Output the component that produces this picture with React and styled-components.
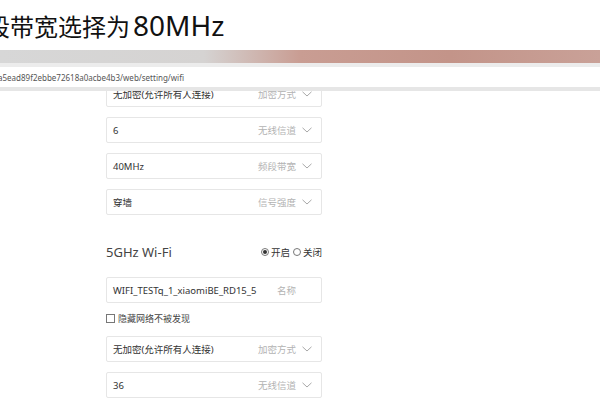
import styled, { createGlobalStyle } from 'styled-components';

const GlobalStyle = createGlobalStyle`
  html, body {
    margin: 0;
    padding: 0;
    background: #fff;
    overflow: hidden;
  }
  body {
    width: 600px;
    height: 400px;
    font-family: "Noto Sans", "Noto Sans CJK SC", sans-serif;
  }
`;

const Page = styled.div`
  width: 600px;
  height: 400px;
  overflow: hidden;
  display: flex;
  flex-direction: column;
`;

const SlideTitle = styled.h1`
  margin: 0;
  height: 50px;
  display: flex;
  align-items: center;
  font-size: 24px;
  font-weight: 400;
  color: #111;
  white-space: nowrap;
  font-family: "Noto Sans", "Noto Sans CJK SC", sans-serif;
`;

const TitleText = styled.span`
  margin-left: -14px;
`;

const TitleLatin = styled.span`
  font-size: 28px;
  margin-left: 3px;
`;

const BrowserBar = styled.div`
  height: 13px;
  background: linear-gradient(
    90deg,
    #d7d7d7 0%,
    #d5d3d2 34%,
    #c99d93 50%,
    #c39489 75%,
    #c9a198 100%
  );
`;

const AddressBar = styled.div`
  height: 20px;
  border-top: 4px solid #ececec;
  border-bottom: 4px solid #e6e6e6;
  background: #fff;
  display: flex;
  align-items: center;
  font-size: 8px;
  color: #555;
  white-space: nowrap;
`;

const Url = styled.span`
  margin-left: -2px;
`;

const Viewport = styled.div`
  flex: 1;
  overflow: hidden;
`;

const Form = styled.div`
  width: 216px;
  margin-left: 106px;
  margin-top: -10px;
  display: flex;
  flex-direction: column;
`;

const Field = styled.div`
  height: 24px;
  border: 1px solid #e6e6e6;
  border-radius: 2px;
  display: flex;
  align-items: center;
  padding: 0 9px 0 6px;
  margin-bottom: ${p => p.$gap ?? 10}px;
  font-size: 9.5px;
  color: #333;
  background: #fff;
`;

const Value = styled.span`
  flex: 1;
  white-space: nowrap;
`;

const NameValue = styled.span`
  width: 164px;
  white-space: nowrap;
`;

const Hint = styled.span`
  color: #b3b3b3;
  font-size: 9.5px;
  margin-right: 6px;
  white-space: nowrap;
`;

const Chevron = () => (
  <svg width="10" height="6" viewBox="0 0 10 6">
    <path d="M0.5 0.8 L5 5 L9.5 0.8" fill="none" stroke="#a8a8a8" strokeWidth="1" />
  </svg>
);

const SectionHead = styled.div`
  margin-top: 27px;
  height: 20px;
  display: flex;
  align-items: center;
  justify-content: space-between;
  margin-bottom: 15px;
`;

const SectionTitle = styled.span`
  font-size: 13px;
  color: #444;
`;

const RadioGroup = styled.div`
  display: flex;
  align-items: center;
  font-size: 9.5px;
  color: #333;
`;

const Radio = styled.span`
  width: 6px;
  height: 6px;
  border-radius: 50%;
  border: 1px solid #777;
  display: inline-flex;
  align-items: center;
  justify-content: center;
  margin: 0 2px 0 ${p => (p.$first ? 0 : 3)}px;

  &::after {
    content: '';
    width: 4px;
    height: 4px;
    border-radius: 50%;
    background: ${p => (p.$on ? '#333' : 'transparent')};
  }
`;

const CheckRow = styled.label`
  display: flex;
  align-items: center;
  height: 14px;
  margin: -7px 0 11px;
  font-size: 9px;
  color: #444;
`;

const Box = styled.span`
  width: 7px;
  height: 7px;
  border: 1px solid #777;
  margin-right: 3px;
`;

const selects24 = [
  { value: '无加密(允许所有人连接)', hint: '加密方式' },
  { value: '6', hint: '无线信道' },
  { value: '40MHz', hint: '频段带宽' },
  { value: '穿墙', hint: '信号强度' },
];

const selects5 = [
  { value: '无加密(允许所有人连接)', hint: '加密方式' },
  { value: '36', hint: '无线信道' },
];

export default function App() {
  return (
    <Page>
      <GlobalStyle />
      <SlideTitle>
        <TitleText>段带宽选择为<TitleLatin>80MHz</TitleLatin></TitleText>
      </SlideTitle>
      <BrowserBar />
      <AddressBar><Url>a5ead89f2ebbe72618a0acbe4b3/web/setting/wifi</Url></AddressBar>
      <Viewport>
        <Form>
          {selects24.map((s, i) => (
            <Field key={i} $gap={i === selects24.length - 1 ? 0 : 10}>
              <Value>{s.value}</Value>
              <Hint>{s.hint}</Hint>
              <Chevron />
            </Field>
          ))}

          <SectionHead>
            <SectionTitle>5GHz Wi-Fi</SectionTitle>
            <RadioGroup>
              <Radio $on $first />开启
              <Radio />关闭
            </RadioGroup>
          </SectionHead>

          <Field $gap={15}>
            <NameValue>WIFI_TESTq_1_xiaomiBE_RD15_5</NameValue>
            <Hint>名称</Hint>
          </Field>

          <CheckRow>
            <Box />隐藏网络不被发现
          </CheckRow>

          {selects5.map((s, i) => (
            <Field key={i}>
              <Value>{s.value}</Value>
              <Hint>{s.hint}</Hint>
              <Chevron />
            </Field>
          ))}
        </Form>
      </Viewport>
    </Page>
  );
}
